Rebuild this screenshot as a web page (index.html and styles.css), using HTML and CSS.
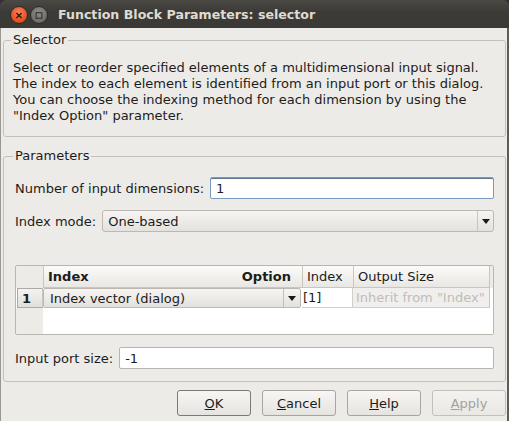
FILE: index.html
```html
<!DOCTYPE html>
<html>
<head>
<meta charset="utf-8">
<link rel="stylesheet" href="styles.css">
</head>
<body>
<div class="window">
  <div class="titlebar">
    <span class="wbtn close"><svg width="17" height="17" viewBox="0 0 17 17"><line x1="5.8" y1="5.8" x2="11.2" y2="11.2" stroke="#3a1a0e" stroke-width="1.6"/><line x1="11.2" y1="5.8" x2="5.8" y2="11.2" stroke="#3a1a0e" stroke-width="1.6"/></svg></span>
    <span class="wbtn maxi"><svg width="17" height="17" viewBox="0 0 17 17"><rect x="5.5" y="5.5" width="6" height="6" fill="none" stroke="#3b3a37" stroke-width="1.3"/></svg></span>
    <span class="title">Function Block Parameters: selector</span>
  </div>
  <div class="content">
    <fieldset class="group selector">
      <legend>Selector</legend>
      <p class="desc">Select or reorder specified elements of a multidimensional input signal.<br>The index to each element is identified from an input port or this dialog.<br>You can choose the indexing method for each dimension by using the<br>"Index Option" parameter.</p>
    </fieldset>
    <fieldset class="group params">
      <legend>Parameters</legend>
      <div class="row">
        <span class="label">Number of input dimensions:</span>
        <div class="field focused">1</div>
      </div>
      <div class="row">
        <span class="label">Index mode:</span>
        <div class="combo"><span class="combo-text">One-based</span><span class="combo-arrow"><svg width="8" height="5" viewBox="0 0 8 5"><path d="M0 0H8L4 5Z" fill="#1a1a1a"/></svg></span></div>
      </div>
      <div class="table">
        <div class="corner"></div>
        <div class="th th-main"><span>Index</span><span>Option</span></div>
        <div class="th">Index</div>
        <div class="th">Output Size</div>
        <div class="th-fill"></div>
        <div class="rh">1</div>
        <div class="cell cell-combo"><span>Index vector (dialog)</span><span class="cell-arrow"><svg width="8" height="5" viewBox="0 0 8 5"><path d="M0 0H8L4 5Z" fill="#1a1a1a"/></svg></span></div>
        <div class="cell cell-edit">[1]</div>
        <div class="cell cell-dis">Inherit from "Index"</div>
        <div class="cell-fill"></div>
        <div class="rh-empty"></div>
        <div class="empty"></div>
      </div>
      <div class="row">
        <span class="label">Input port size:</span>
        <div class="field">-1</div>
      </div>
    </fieldset>
    <div class="buttons">
      <button class="btn default"><u>O</u>K</button>
      <button class="btn"><u>C</u>ancel</button>
      <button class="btn"><u>H</u>elp</button>
      <button class="btn disabled"><u>A</u>pply</button>
    </div>
  </div>
</div>
</body>
</html>
```
FILE: styles.css
```css
* { box-sizing: border-box; }
html, body { margin: 0; padding: 0; }
body {
  background: #3a2a35;
  font-family: "DejaVu Sans", sans-serif;
  font-size: 13px;
  color: #1c1c1c;
  width: 509px;
  height: 421px;
  overflow: hidden;
}
.window {
  width: 509px;
  height: 421px;
  display: flex;
  flex-direction: column;
}
.titlebar {
  height: 28px;
  flex: none;
  background: linear-gradient(#4a4944, #3c3b37 40%, #3a3935);
  border-radius: 6px 6px 0 0;
  display: flex;
  align-items: center;
  padding-left: 10px;
  gap: 2px;
}
.wbtn {
  width: 18px;
  height: 18px;
  border-radius: 50%;
  display: flex;
  align-items: center;
  justify-content: center;
  margin-top: 2px;
}
.close {
  background: radial-gradient(circle at 50% 35%, #f7845a, #e9572a 55%, #c9431b);
  border: 1px solid #2d2b28;
}
.maxi {
  background: radial-gradient(circle at 50% 35%, #8f8d88, #74726d 60%, #62605b);
  border: 1px solid #2d2b28;
}
.title {
  margin-left: 8px;
  margin-top: 1px;
  color: #dfdbd2;
  font-weight: bold;
  font-size: 12.6px;
}
.content {
  flex: 1;
  background: #edebe7;
  border-left: 1px solid #9a9792;
  border-right: 2px solid #5e5c58;
  padding: 5px 1px 0 2px;
  display: flex;
  flex-direction: column;
}
.group {
  margin: 0;
  border: 1px solid #c5c1ba;
  border-radius: 3px;
  min-width: 0;
}
.group legend {
  padding: 0 2px;
  margin-left: -2px;
  line-height: 14px;
}
.selector {
  padding: 13px 9px 12px 9px;
}
.desc {
  margin: 0;
  line-height: 16px;
}
.params {
  margin-top: 12px;
  padding: 14px 11px 12px 11px;
  display: flex;
  flex-direction: column;
}
.row {
  display: flex;
  align-items: center;
  gap: 6px;
  height: 22px;
}
.row + .row { margin-top: 11px; }
.label { white-space: nowrap; }
.field {
  flex: 1;
  height: 22px;
  background: #fff;
  border: 1px solid #b9b5ae;
  border-radius: 2px;
  padding: 0 5px;
  display: flex;
  align-items: center;
}
.field.focused {
  border-color: #7a9bbf;
  box-shadow: inset 0 1px 0 #5b7897;
}
.combo {
  flex: 1;
  height: 22px;
  border: 1px solid #bdb8b0;
  border-radius: 3px;
  background: linear-gradient(#f6f5f3, #e4e2de);
  display: flex;
  align-items: center;
}
.combo-text { flex: 1; padding-left: 5px; }
.combo-arrow {
  width: 16px;
  height: 100%;
  border-left: 1px solid #c8c4bd;
  display: flex;
  align-items: center;
  justify-content: center;
}
.table {
  margin-top: 33px;
  margin-bottom: 12px;
  height: 70px;
  border: 1px solid #bab6af;
  border-radius: 2px;
  display: grid;
  grid-template-columns: 27px 259px 51px 137px 1fr;
  grid-template-rows: 22px 20px 1fr;
  background: #fff;
  overflow: hidden;
}
.corner { background: #edebe7; }
.th {
  background: linear-gradient(#fbfbfa, #e9e7e3);
  border-left: 1px solid #c9c5bf;
  border-bottom: 1px solid #c9c5bf;
  padding: 0 4px;
  display: flex;
  align-items: center;
}
.th:nth-child(4) { border-right: 1px solid #c9c5bf; }
.th-main {
  font-weight: bold;
  justify-content: space-between;
  padding-right: 11px;
}
.th-fill { background: #edebe7; }
.rh {
  background: linear-gradient(#f4f3f1, #e1dfdb);
  border: 1px solid #aeaaa3;
  border-right-color: #c9c5bf;
  margin-left: 1px;
  font-weight: bold;
  padding-left: 4px;
  display: flex;
  align-items: center;
}
.cell {
  display: flex;
  align-items: center;
  border-bottom: 1px solid #d2cec8;
}
.cell-combo {
  background: linear-gradient(#f6f5f3, #e3e1dd);
  border: 1px solid #bdb8b0;
  border-radius: 2px;
  padding-left: 6px;
  justify-content: space-between;
  margin-right: 1px;
}
.cell-arrow {
  width: 17px;
  height: 100%;
  border-left: 1px solid #c3bfb8;
  display: flex;
  align-items: center;
  justify-content: center;
}
.cell-edit {
  background: #fff;
  padding-left: 1px;
  border-right: 1px solid #d2cec8;
}
.cell-dis {
  background: #f0efed;
  color: #c3bcb5;
  padding-left: 3px;
  white-space: nowrap;
  border-right: 1px solid #c9c5bf;
}
.cell-fill { background: #fff; }
.rh-empty { background: #edebe7; }
.empty { grid-column: 2 / 6; background: #fff; }
.buttons {
  display: flex;
  justify-content: flex-end;
  gap: 11px;
  margin-top: 8px;
}
.btn {
  width: 74px;
  height: 26px;
  font-family: "DejaVu Sans", sans-serif;
  font-size: 13px;
  color: #1c1c1c;
  border: 1px solid #a9a59e;
  border-radius: 3px;
  background: linear-gradient(#f7f6f5, #e6e4e0);
  padding: 0;
}
.btn.default { border-color: #7d7a74; }
.btn.disabled { color: #a5a19a; border-color: #c4c0b9; background: linear-gradient(#f3f2f0, #eae8e4); }
```
